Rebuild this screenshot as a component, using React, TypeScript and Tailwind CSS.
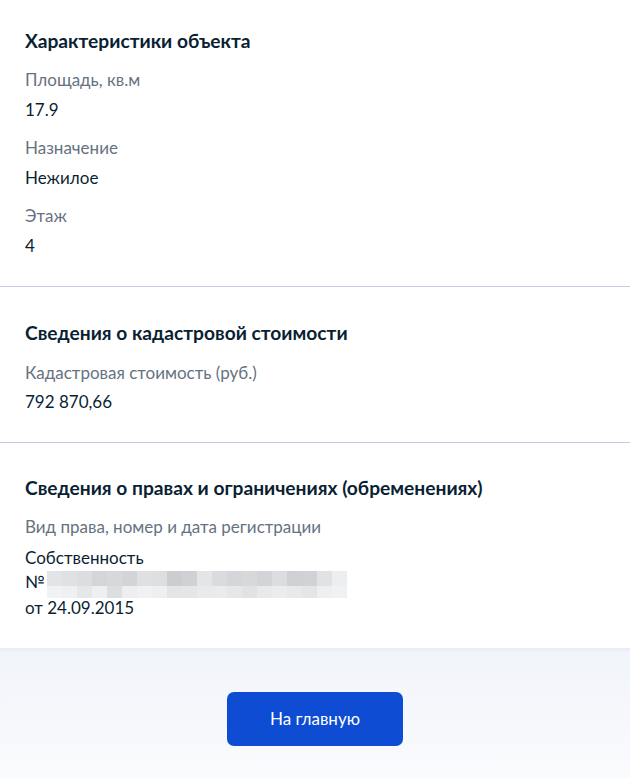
import React from "react";

const blurTop = ["#e3e4e6","#e0e1e3","#dcdde0","#d3d5d8","#d6d8db","#d2d4d7","#dfe0e2","#dcdee0","#cbcdd1","#cfd1d4","#e4e5e7","#d9dbde","#d4d6d9","#d6d8da","#d2d4d7","#dcdde0","#cfd1d4","#d0d2d5","#e1e2e4","#eceef0"];
const blurBot = ["#f1f2f3","#eff0f1","#e6e7e9","#eeeff0","#dcdee0","#eceeef","#f0f1f2","#eeeff0","#e3e5e7","#e5e6e8","#e9eaec","#eaebec","#e6e7e9","#e1e2e4","#e8e9eb","#ebeced","#e8e9eb","#e4e5e7","#eeeff0","#f0f1f2"];

function Field({ label, children, gap = "mt-[10px]" }: { label: string; children: React.ReactNode; gap?: string }) {
  return (
    <div className="flex flex-col">
      <div className="text-[17px] leading-[20px] text-[#66727f]">{label}</div>
      <div className={`${gap} text-[17px] leading-[20px] text-[#0b1f33]`}>{children}</div>
    </div>
  );
}

export default function App() {
  return (
    <div className="w-[630px] h-[778px] flex flex-col bg-white" style={{ fontFamily: "Lato, 'Noto Sans', sans-serif" }}>
      <div className="flex flex-col">
        <section className="px-[25px] pt-[29px] pb-[30px] flex flex-col">
          <h2 className="text-[19.2px] leading-[24px] font-bold text-[#0b1f33]">Характеристики объекта</h2>
          <div className="mt-[17px] flex flex-col gap-[18px]">
            <Field label="Площадь, кв.м">17.9</Field>
            <Field label="Назначение">Нежилое</Field>
            <Field label="Этаж">4</Field>
          </div>
        </section>
        <div className="h-px bg-[#c6cce3]" />
        <section className="px-[25px] pt-[34px] pb-[30px] flex flex-col">
          <h2 className="text-[19.2px] leading-[24px] font-bold text-[#0b1f33]">Сведения о кадастровой стоимости</h2>
          <div className="mt-[18px] flex flex-col">
            <Field label="Кадастровая стоимость (руб.)" gap="mt-[9px]">792 870,66</Field>
          </div>
        </section>
        <div className="h-px bg-[#c6cce3]" />
        <section className="px-[25px] pt-[33px] pb-[28px] flex flex-col">
          <h2 className="text-[19.2px] leading-[24px] font-bold text-[#0b1f33]">Сведения о правах и ограничениях (обременениях)</h2>
          <div className="mt-[17px] flex flex-col">
            <div className="text-[17px] leading-[20px] text-[#66727f]">Вид права, номер и дата регистрации</div>
            <div className="mt-[9px] text-[17px] leading-[24px] text-[#0b1f33] flex flex-col">
              <span>Собственность</span>
              <span className="flex items-start h-[24px]">
                <span>№</span>
                <span className="ml-[2px] mt-[1px] flex flex-col">
                  <span className="flex">
                    {blurTop.map((c, i) => (
                      <span key={i} className="w-[15px] h-[15px]" style={{ backgroundColor: c }} />
                    ))}
                  </span>
                  <span className="flex">
                    {blurBot.map((c, i) => (
                      <span key={i} className="w-[15px] h-[12px]" style={{ backgroundColor: c }} />
                    ))}
                  </span>
                </span>
              </span>
              <span className="mt-[2px]">от 24.09.2015</span>
            </div>
          </div>
        </section>
      </div>
      <div className="flex-1 bg-gradient-to-b from-[#f1f4fa] to-[#fafbfd] shadow-[inset_0_4px_4px_-2px_rgba(0,0,0,0.04)] flex justify-center pt-[44px]">
        <button className="w-[176px] h-[54px] rounded-[7px] bg-[#0d4cd3] text-white text-[17px]" style={{ fontFamily: "Lato, sans-serif" }}>
          На главную
        </button>
      </div>
    </div>
  );
}
